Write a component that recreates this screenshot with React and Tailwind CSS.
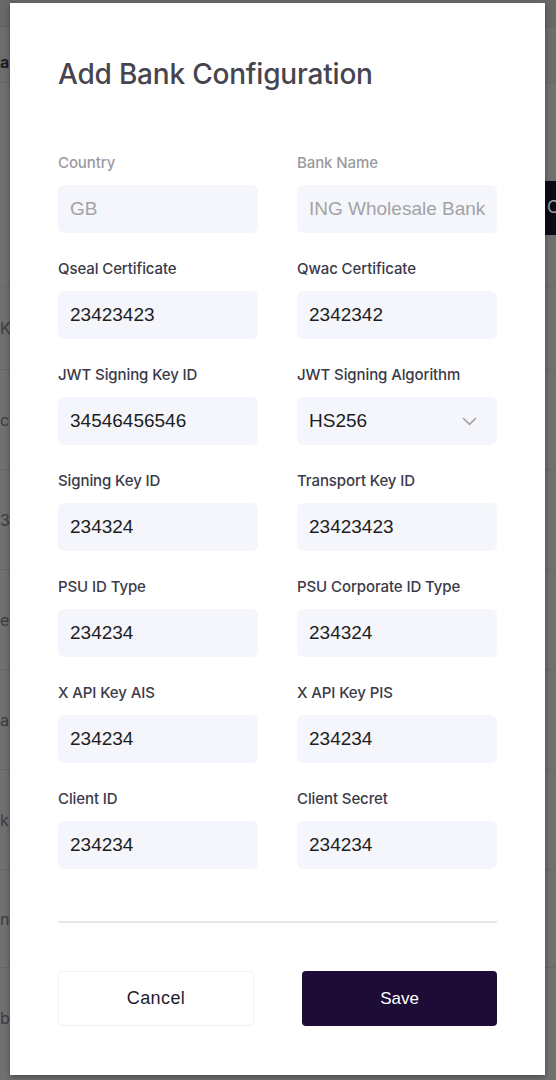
import React from "react";

const fields = [
  { label: "Country", value: "GB", disabled: true },
  { label: "Bank Name", value: "ING Wholesale Bank", disabled: true },
  { label: "Qseal Certificate", value: "23423423" },
  { label: "Qwac Certificate", value: "2342342" },
  { label: "JWT Signing Key ID", value: "34546456546" },
  { label: "JWT Signing Algorithm", value: "HS256", select: true },
  { label: "Signing Key ID", value: "234324" },
  { label: "Transport Key ID", value: "23423423" },
  { label: "PSU ID Type", value: "234234" },
  { label: "PSU Corporate ID Type", value: "234324" },
  { label: "X API Key AIS", value: "234234" },
  { label: "X API Key PIS", value: "234234" },
  { label: "Client ID", value: "234234" },
  { label: "Client Secret", value: "234234" },
];

function Field({ f }) {
  return (
    <div className="flex flex-col">
      <div
        className={
          "h-[20px] leading-[20px] text-[15px] font-medium tracking-[-0.1px] " +
          (f.disabled ? "text-[#9a9aa0]" : "text-[#3b3a48]")
        }
      >
        {f.label}
      </div>
      <div className="mt-[12px] h-[48px] rounded-[6px] bg-[#f5f6fb] flex items-center justify-between pl-[12px] pr-[20px] overflow-hidden">
        <span
          className={
            "whitespace-nowrap text-[19px] font-['Liberation_Sans',Arial,sans-serif] " +
            (f.disabled ? "text-[#a3a3a6]" : "text-[#1d1d22]")
          }
        >
          {f.value}
        </span>
        {f.select && (
          <svg width="15" height="9" viewBox="0 0 15 9" fill="none">
            <path d="M1.5 1.5L7.5 7.3L13.5 1.5" stroke="#a0a0a6" strokeWidth="1.6" strokeLinecap="round" strokeLinejoin="round" />
          </svg>
        )}
      </div>
    </div>
  );
}

function BgRow({ h, text, bold, className = "" }) {
  return (
    <div className={"flex items-center border-b border-[#676767] " + className} style={{ height: h }}>
      <span className={"whitespace-nowrap text-[16px] " + (bold ? "font-bold text-[#1e1e24]" : "text-[#3c3c40]")}>
        {text}
      </span>
    </div>
  );
}

export default function App() {
  return (
    <div className="relative w-[556px] h-[1080px] overflow-hidden bg-[#707070] font-['Inter',sans-serif]">
      {/* background page under overlay */}
      <div className="flex flex-col">
        <div className="h-[27px] bg-[#686868] border-b border-[#646464]" />
        <BgRow h={56} text="a" bold className="bg-[#6d6d6d] pt-[14px]" />
        <div className="h-[204px] flex flex-col items-end border-b border-[#686868]">
          <div className="mt-[98px] h-[54px] w-[11px] bg-[#0d0b17] flex items-center pl-[2px] overflow-hidden">
            <span className="text-[17px] text-[#9c9ca4]">C</span>
          </div>
        </div>
        <BgRow h={83} text="K" className="text-[#555]" />
        <BgRow h={100} text="co" />
        <BgRow h={100} text="3" />
        <BgRow h={100} text="e" />
        <BgRow h={100} text="ar" />
        <BgRow h={100} text="k" />
        <BgRow h={98} text="n" />
        <div className="h-[100px] flex items-center">
          <span className="text-[16px] text-[#3c3c40]">bo</span>
        </div>
      </div>

      {/* modal */}
      <div className="absolute left-[10px] top-[3px] w-[535px] h-[1072px] bg-white shadow-[0_2px_6px_rgba(0,0,0,0.35)] flex flex-col px-[48px] pt-[53px]">
        <h1 className="h-[36px] leading-[36px] text-[28px] font-medium text-[#46454f] tracking-[-0.2px]">
          Add Bank Configuration
        </h1>
        <div className="mt-[61px] grid grid-cols-[200px_200px] justify-between gap-y-[26px]">
          {fields.map((f) => (
            <Field key={f.label} f={f} />
          ))}
        </div>
        <div className="mt-[52px] h-[2px] bg-[#e6e6e8]" />
        <div className="mt-[48px] flex justify-between">
          <button className="w-[196px] h-[55px] rounded-[4px] border border-[#f0f0f6] bg-white text-[18px] tracking-[0.4px] text-[#1f1b2e] font-['Liberation_Sans',Arial,sans-serif]">
            Cancel
          </button>
          <button className="w-[195px] h-[55px] rounded-[4px] bg-[#1c0c36] text-[17px] text-white font-['Liberation_Sans',Arial,sans-serif]">
            Save
          </button>
        </div>
      </div>
    </div>
  );
}
